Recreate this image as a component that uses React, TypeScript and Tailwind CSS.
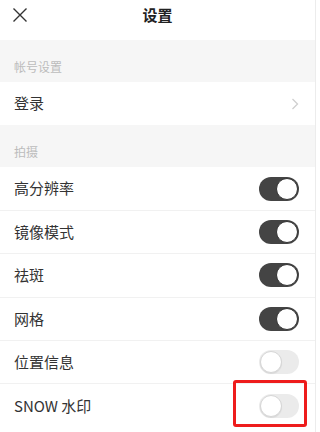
import React from "react";

const font = '"Noto Sans CJK SC", "Noto Sans", sans-serif';

function Toggle({ on }: { on: boolean }) {
  return on ? (
    <div className="w-[40px] h-[24px] rounded-full bg-[#444444] flex items-center justify-end pr-[1px]">
      <div className="w-[22px] h-[22px] rounded-full bg-white border border-[#333]" />
    </div>
  ) : (
    <div className="w-[40px] h-[24px] rounded-full bg-[#ebebeb] flex items-center justify-start pl-[1px]">
      <div className="w-[22px] h-[22px] rounded-full bg-white border border-[#d6d6d6] shadow-[0_1px_1px_rgba(0,0,0,0.08)]" />
    </div>
  );
}

function Section({ label }: { label: string }) {
  return (
    <div className="h-[42px] bg-[#f6f6f6] flex items-end pb-[6px] pl-[14px] text-[12px] text-[#bcbcbc]">
      {label}
    </div>
  );
}

function Row({ label, children, last }: { label: string; children?: React.ReactNode; last?: boolean }) {
  return (
    <div
      className={
        "h-[43.4px] flex items-center justify-between pl-[14px] pr-[16px] bg-white " +
        (last ? "" : "border-b border-[#f1f1f1]")
      }
    >
      <span className="text-[15px] text-[#333]">{label}</span>
      {children}
    </div>
  );
}

export default function App() {
  return (
    <div className="w-[320px] h-[432px] bg-white overflow-hidden flex" style={{ fontFamily: font }}>
      <div className="w-[316px] border-r border-[#ececec] flex flex-col">
        <div className="h-[40px] relative flex items-center justify-center">
          <svg className="absolute left-[12px] top-[7px]" width="16" height="16" viewBox="0 0 16 16">
            <path d="M1.5 1.5 L14.5 14.5 M14.5 1.5 L1.5 14.5" stroke="#333" strokeWidth="1.4" fill="none" />
          </svg>
          <span className="text-[15px] font-bold text-[#222] -mt-[10px]">设置</span>
        </div>
        <Section label="帐号设置" />
        <Row label="登录" last>
          <svg width="8" height="12" viewBox="0 0 8 12">
            <path d="M1.5 1 L6.5 6 L1.5 11" stroke="#cfcfcf" strokeWidth="1.3" fill="none" />
          </svg>
        </Row>
        <Section label="拍摄" />
        <Row label="高分辨率"><Toggle on /></Row>
        <Row label="镜像模式"><Toggle on /></Row>
        <Row label="祛斑"><Toggle on /></Row>
        <Row label="网格"><Toggle on /></Row>
        <Row label="位置信息"><Toggle on={false} /></Row>
        <div className="relative">
          <Row label="SNOW 水印" last><Toggle on={false} /></Row>
          <div className="absolute left-[233px] top-[-4px] w-[74px] h-[47px] border-[3px] border-[#ee1c1c] rounded-[3px]" />
        </div>
      </div>
    </div>
  );
}
